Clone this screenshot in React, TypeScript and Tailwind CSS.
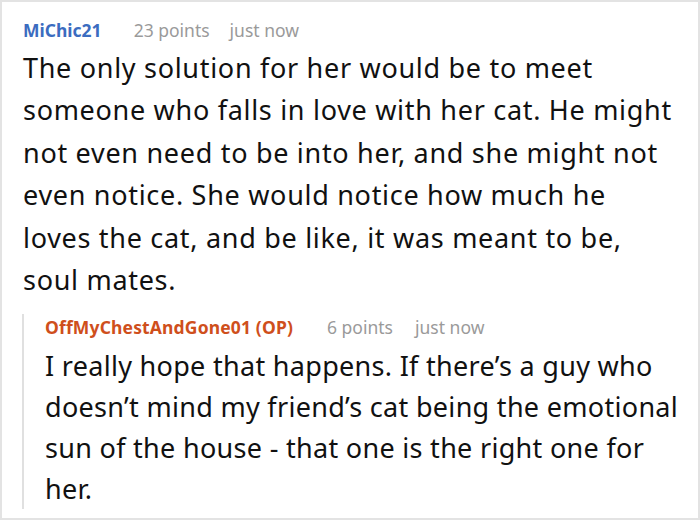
export default function App() {
  return (
    <div className="w-[700px] h-[520px] bg-white border-2 border-[#e3e3e3] font-['Noto_Sans',sans-serif] overflow-hidden">
      <div className="pl-[21px] pr-2 pt-[15px]">
        {/* Top comment */}
        <div className="flex items-baseline text-[17.5px] leading-[26px]">
          <span className="font-bold text-[#3b6cc0]">MiChic21</span>
          <span className="ml-8 text-[#9a9a9a]">23 points</span>
          <span className="ml-5 text-[#9a9a9a]">just now</span>
        </div>
        <p className="mt-[4px] whitespace-nowrap text-[27px] leading-[42.4px] tracking-[0.7px] text-[#111]">
          The only solution for her would be to meet
          <br />
          someone who falls in love with her cat. He might
          <br />
          not even need to be into her, and she might not
          <br />
          even notice. She would notice how much he
          <br />
          loves the cat, and be like, it was meant to be,
          <br />
          soul mates.
        </p>

        {/* Reply */}
        <div className="mt-[24px] ml-[-1px] border-l-2 border-[#e0e0e0] pl-[21px]">
          <div className="-mt-[11px] flex items-baseline text-[17.5px] leading-[26px]">
            <span className="font-bold tracking-[0.15px] text-[#cf4f1c]">OffMyChestAndGone01 (OP)</span>
            <span className="ml-[34px] text-[#9a9a9a]">6 points</span>
            <span className="ml-[22px] text-[#9a9a9a]">just now</span>
          </div>
          <p className="mt-[5px] -mb-[10px] whitespace-nowrap text-[27px] leading-[41px] tracking-[0.3px] text-[#111]">
            I really hope that happens. If there’s a guy who
            <br />
            doesn’t mind my friend’s cat being the emotional
            <br />
            sun of the house - that one is the right one for
            <br />
            her.
          </p>
        </div>
      </div>
    </div>
  );
}
